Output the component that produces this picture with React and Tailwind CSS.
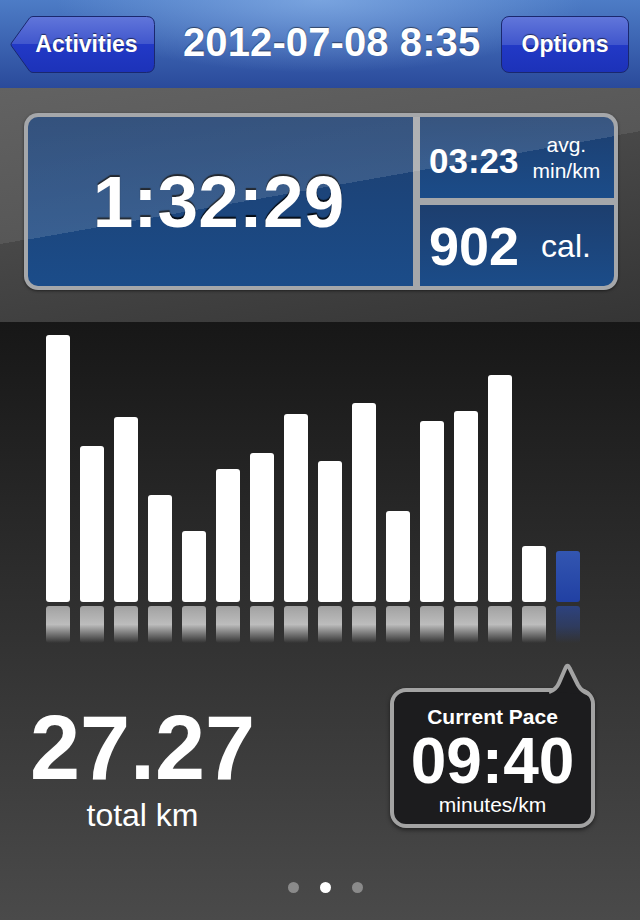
const bars = [267, 156, 185, 107, 71, 133, 149, 188, 141, 199, 91, 181, 191, 227, 56, 51];

function BackButton() {
    return (
        <button className="relative w-[145px] h-[57px] flex items-center justify-center pl-[8px]">
            <svg className="absolute inset-0" width="145" height="57" viewBox="0 0 145 57">
                <defs>
                    <linearGradient id="btnGrad" x1="0" y1="0" x2="0" y2="1">
                        <stop offset="0" stopColor="#6176da" />
                        <stop offset="0.5" stopColor="#4056cd" />
                        <stop offset="0.5" stopColor="#2239c6" />
                        <stop offset="1" stopColor="#1c32b9" />
                    </linearGradient>
                </defs>
                <path
                    d="M23 0.5 H136.5 Q144.5 0.5 144.5 8.5 V48.5 Q144.5 56.5 136.5 56.5 H23 Q21 56.5 19.5 55 L1.5 30 Q0.5 28.5 1.5 27 L19.5 2 Q21 0.5 23 0.5 Z"
                    fill="url(#btnGrad)"
                    stroke="#1a286e"
                    strokeWidth="1"
                />
            </svg>
            <span className="relative text-[23px] font-bold leading-none [text-shadow:0_-1px_1px_rgba(0,0,0,0.55)]">Activities</span>
        </button>
    );
}

function NavBar() {
    return (
        <div className="h-[88px] shrink-0 flex items-center pl-[10px] pr-[11px] bg-[radial-gradient(ellipse_55%_110%_at_50%_0%,rgba(150,190,240,0.6),rgba(150,190,240,0)_75%),linear-gradient(to_bottom,#4d7cc6,#2a4a9b)]">
            <BackButton />
            <div className="ml-[28px] mb-1 text-[40px] font-bold leading-[40px] tracking-[0.1px] [text-shadow:0_-1px_1px_rgba(0,0,0,0.5)]">
                2012-07-08 8:35
            </div>
            <button className="ml-auto w-[128px] h-[57px] rounded-[8px] border border-[#1a286e] bg-[linear-gradient(to_bottom,#6176da_0%,#4056cd_50%,#2239c6_50%,#1c32b9_100%)] text-[23px] font-bold leading-none [text-shadow:0_-1px_1px_rgba(0,0,0,0.55)]">
                Options
            </button>
        </div>
    );
}

function StatsPanel() {
    const cell = 'bg-[linear-gradient(to_bottom,#1d3e6e,#1b4c89)]';
    return (
        <div className="relative w-[594px] h-[177px] rounded-[14px] bg-[#a5a7aa] p-[4px] flex gap-[7px] shadow-[0_1px_3px_rgba(0,0,0,0.5)]">
            <div className={`w-[385px] rounded-l-[10px] ${cell} flex items-center justify-center`}>
                <span className="mr-[4px] text-[73px] font-bold leading-none [text-shadow:0_-2px_1px_rgba(0,0,0,0.85)]">1:32:29</span>
            </div>
            <div className="flex-1 flex flex-col gap-[7px]">
                <div className={`h-[81px] rounded-tr-[10px] ${cell} flex items-center pl-[9px]`}>
                    <span className="mt-[6px] text-[35px] font-bold leading-none">03:23</span>
                    <div className="ml-[14px] flex flex-col items-center text-[21px] leading-[26px]">
                        <span>avg.</span>
                        <span>min/km</span>
                    </div>
                </div>
                <div className={`flex-1 rounded-br-[10px] ${cell} flex items-center pl-[9px]`}>
                    <span className="text-[54px] font-bold leading-none">902</span>
                    <span className="ml-[22px] text-[32px] leading-none">cal.</span>
                </div>
            </div>
            <div className="absolute inset-[4px] rounded-[10px] pointer-events-none bg-[linear-gradient(170deg,rgba(255,255,255,0.1)_0%,rgba(255,255,255,0.13)_45%,rgba(255,255,255,0)_45%)]" />
        </div>
    );
}

function Chart() {
    const last = bars.length - 1;
    return (
        <div>
            <div className="h-[280px] flex items-end gap-[10px] pl-[46px]">
                {bars.map((h, i) => (
                    <div
                        key={i}
                        className={`w-[24px] rounded-[3px] ${i === last ? 'bg-[linear-gradient(to_bottom,#3356b1,#2140a3)]' : 'bg-white'}`}
                        style={{ height: h }}
                    />
                ))}
            </div>
            <div className="mt-[4px] flex gap-[10px] pl-[46px]">
                {bars.map((h, i) => (
                    <div
                        key={i}
                        className={`w-[24px] h-[37px] rounded-[3px] ${i === last
                            ? 'bg-[linear-gradient(to_bottom,rgba(45,70,140,0.85),rgba(45,70,140,0.5)_55%,rgba(45,70,140,0))]'
                            : 'bg-[linear-gradient(to_bottom,rgba(255,255,255,0.55),rgba(255,255,255,0.68)_50%,rgba(255,255,255,0)_100%)]'}`}
                    />
                ))}
            </div>
        </div>
    );
}

function PaceBubble() {
    return (
        <div className="relative mt-[45px] ml-[105px] w-[205px] h-[140px] rounded-[16px] border-4 border-[#a3a3a3] bg-[#1c1c1e] shadow-[0_2px_4px_rgba(0,0,0,0.5)] flex flex-col items-center pt-[13px]">
            <svg className="absolute left-[154px] top-[-30px] overflow-visible" width="42" height="34" viewBox="0 0 42 34">
                <path
                    d="M1 30 Q8 28 11 21 L17.5 6 Q19.5 1.5 21.5 6 L30 23 Q34 30 41 32"
                    fill="#1c1c1e"
                    stroke="#a3a3a3"
                    strokeWidth="4"
                    strokeLinejoin="round"
                />
            </svg>
            <span className="relative text-[21px] font-bold leading-[24px]">Current Pace</span>
            <span className="relative text-[64px] font-bold leading-[64px]">09:40</span>
            <span className="relative text-[21px] leading-[24px]">minutes/km</span>
        </div>
    );
}

export default function App() {
    return (
        <div className="w-[640px] h-[920px] overflow-hidden flex flex-col text-white font-['Liberation_Sans',Arial,sans-serif]">
            <NavBar />
            <section className="h-[234px] shrink-0 pt-[25px] pl-[24px] bg-[linear-gradient(170deg,#626262_0%,#575757_45%,#484848_45%,#353535_100%)]">
                <StatsPanel />
            </section>
            <section className="flex-1 bg-[linear-gradient(to_bottom,#171717,#4a4a4a)]">
                <Chart />
                <div className="flex items-start">
                    <div className="mt-[60px] w-[285px] flex flex-col items-center">
                        <span className="text-[90px] font-bold leading-[90px]">27.27</span>
                        <span className="mt-[4px] text-[32px] leading-[36px]">total km</span>
                    </div>
                    <PaceBubble />
                </div>
                <div className="mt-[49px] pl-[10px] flex justify-center gap-[21px]">
                    <span className="w-[11px] h-[11px] rounded-full bg-[#8a8a8a]" />
                    <span className="w-[11px] h-[11px] rounded-full bg-white" />
                    <span className="w-[11px] h-[11px] rounded-full bg-[#8a8a8a]" />
                </div>
            </section>
        </div>
    );
}
